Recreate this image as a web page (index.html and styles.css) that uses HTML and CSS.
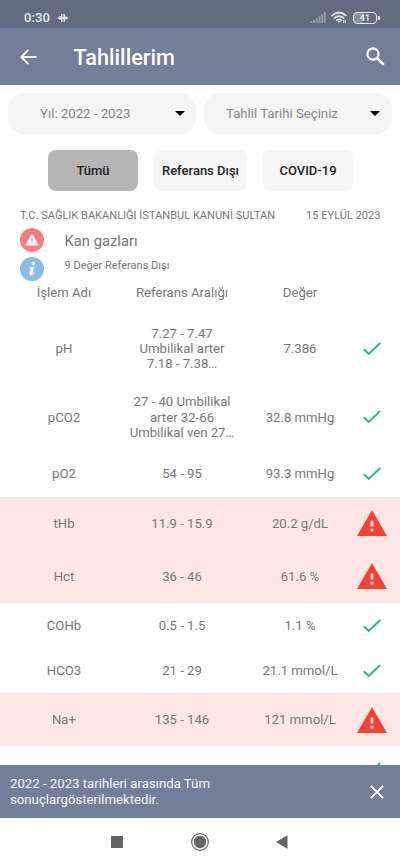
FILE: index.html
```html
<!DOCTYPE html>
<html lang="tr">
<head>
<meta charset="utf-8">
<title>Tahlillerim</title>
<link rel="stylesheet" href="styles.css">
</head>
<body>
<svg class="defs" width="0" height="0">
  <symbol id="check" viewBox="0 0 18 14"><path d="M.8 7.2 5.7 12 17.2 1" fill="none" stroke="#22b596" stroke-width="1.9"/></symbol>
  <symbol id="alert" viewBox="0 0 30 26"><path d="M15 0 30 26H0Z" fill="#f44336"/><path d="M13.6 10.7h2.8v5.8h-2.8zM13.6 18.7h2.8v2.7h-2.8z" fill="#fde5e3"/></symbol>
</svg>
<div class="screen">
  <div class="status">
    <span class="clock">0:30</span>
    <svg class="pulse" width="12" height="12" viewBox="0 0 12 12" fill="none" stroke="#e6e8ef" stroke-width="1.4"><path d="M.5 6h10.5M3 4v4M4.8 2v8M7.2 2v8M9 4.5v3"/></svg>
    <svg class="signal" width="16" height="11" viewBox="0 0 16 11" fill="#9299a9"><path d="M0 9.5h2V11H0zM2.9 8h2v3h-2zM5.7 6.2h2V11h-2zM8.5 4.2h2V11h-2zM11.2 2.2h2V11h-2zM13.8 0h1.8v11h-1.8z"/></svg>
    <svg class="wifi" width="17" height="13" viewBox="0 0 17 13" fill="none" stroke="#e6e8ef" stroke-width="1.7"><path d="M.7 4.8Q8 -1.8 15.3 4.8M3 7.3Q8 2.9 13 7.3M5.2 9.6Q8 7.2 10.8 9.6"/><path d="M6.5 10.1h3L8 12zM12.2 9h1.2v3h-1.2z" fill="#e6e8ef" stroke="none"/><path d="M14.6 9v3" stroke-width="1"/></svg>
    <span class="battery">41</span>
  </div>
  <header class="bar">
    <svg class="back" width="17" height="16" viewBox="0 0 17 16" fill="none" stroke="#fff" stroke-width="1.8"><path d="M16.5 8H1.5M8.3 .8 1.2 8l7.1 7.2"/></svg>
    <h1>Tahlillerim</h1>
    <svg class="search" width="19" height="19" viewBox="0 0 19 19" fill="none" stroke="#fff"><circle cx="7" cy="7" r="5.6" stroke-width="2.1"/><path d="m11.2 11.2 6.6 6.6" stroke-width="2.5"/></svg>
  </header>
  <main class="content">
    <div class="filters">
      <div class="select year"><span>Yıl: 2022 - 2023</span><i></i></div>
      <div class="select date"><span>Tahlil Tarihi Seçiniz</span><i></i></div>
    </div>
    <div class="chips">
      <div class="chip active">Tümü</div>
      <div class="chip mid">Referans Dışı</div>
      <div class="chip">COVID-19</div>
    </div>
    <div class="meta"><span class="hospital">T.C. SAĞLIK BAKANLIĞI İSTANBUL KANUNİ SULTAN</span><span class="day">15 EYLÜL 2023</span></div>
    <div class="summary">
      <svg width="24" height="24" viewBox="0 0 24 24"><circle cx="12" cy="12" r="12" fill="#fb7c80"/><path d="M12 6.2 18.2 17H5.8Z" fill="#fff" stroke="#fff" stroke-linejoin="round"/><path d="M11.4 9.5h1.2v4h-1.2zM11.4 14.5h1.2v1.3h-1.2z" fill="#fb7c80"/></svg>
      <span class="test">Kan gazları</span>
    </div>
    <div class="summary second">
      <svg width="24" height="24" viewBox="0 0 24 24"><circle cx="12" cy="12" r="12" fill="#8abde1"/><circle cx="13.4" cy="6.5" r="1.8" fill="#fff"/><path d="M9.5 10.2Q12 10 14.2 9.4L12.4 16.2Q12.5 17 14.1 15.4L14.8 16Q12.2 18.8 10.2 18Q9 17.5 9.6 15.5L10.7 11.8Q10.6 11.2 9.3 11.2Z" fill="#fff"/></svg>
      <span class="count">9 Değer Referans Dışı</span>
    </div>
    <div class="row head"><span>İşlem Adı</span><span>Referans Aralığı</span><span>Değer</span></div>
    <div class="row tall"><span>pH</span><span>7.27 - 7.47<br>Umbilikal arter<br>7.18 - 7.38…</span><span>7.386</span><svg class="check"><use href="#check"/></svg></div>
    <div class="row tall"><span>pCO2</span><span>27 - 40 Umbilikal<br>arter 32-66<br>Umbilikal ven 27…</span><span>32.8 mmHg</span><svg class="check"><use href="#check"/></svg></div>
    <div class="row"><span>pO2</span><span>54 - 95</span><span>93.3 mmHg</span><svg class="check"><use href="#check"/></svg></div>
    <div class="row out"><span>tHb</span><span>11.9 - 15.9</span><span>20.2 g/dL</span><svg class="alert"><use href="#alert"/></svg></div>
    <div class="row out"><span>Hct</span><span>36 - 46</span><span>61.6 %</span><svg class="alert"><use href="#alert"/></svg></div>
    <div class="row"><span>COHb</span><span>0.5 - 1.5</span><span>1.1 %</span><svg class="check"><use href="#check"/></svg></div>
    <div class="row"><span>HCO3</span><span>21 - 29</span><span>21.1 mmol/L</span><svg class="check"><use href="#check"/></svg></div>
    <div class="row out"><span>Na+</span><span>135 - 146</span><span>121 mmol/L</span><svg class="alert"><use href="#alert"/></svg></div>
    <div class="row"><span></span><span></span><span></span><svg class="check"><use href="#check"/></svg></div>
  </main>
  <div class="snackbar">
    <p>2022 - 2023 tarihleri arasında Tüm<br>sonuçlargösterilmektedir.</p>
    <svg width="14" height="14" viewBox="0 0 14 14" stroke="#fff" stroke-width="1.8"><path d="m.8.8 12.4 12.4M13.2.8.8 13.2"/></svg>
  </div>
  <nav class="nav">
    <svg width="12" height="12" viewBox="0 0 12 12"><rect width="12" height="12" rx=".5" fill="#656565"/></svg>
    <svg width="18" height="18" viewBox="0 0 18 18"><circle cx="9" cy="9" r="8.3" fill="none" stroke="#656565" stroke-width="1.2"/><circle cx="9" cy="9" r="6.2" fill="#656565"/></svg>
    <svg width="12" height="14" viewBox="0 0 12 14"><path d="M0 7 11.5.3v13.4z" fill="#656565"/></svg>
  </nav>
</div>
</body>
</html>
```
FILE: styles.css
```css
* { box-sizing: border-box; }
body { margin: 0; background: #fefefe; font-family: Roboto, sans-serif; color: #777; }
.defs { display: block; height: 0; }
.screen { width: 400px; height: 866px; display: flex; flex-direction: column; overflow: hidden; }
svg { flex: none; display: block; }

.status { height: 28px; flex: none; background: #636b81; display: flex; align-items: center; padding: 7px 23px 0 24px; color: #e6e8ef; }
.clock { font-size: 13px; font-weight: 500; width: 33px; letter-spacing: .1px; }
.signal { margin-left: auto; }
.wifi { margin-left: 5px; }
.battery { margin-left: 5px; width: 24px; height: 12px; border: 1.5px solid #e6e8ef; border-radius: 4px; font-size: 8.5px; font-weight: 700; line-height: 10px; text-align: center; background: linear-gradient(90deg, #8b91a2 40%, transparent 40%); position: relative; }
.battery::after { content: ""; position: absolute; right: -3.5px; top: 3px; width: 2px; height: 4px; background: #e6e8ef; border-radius: 0 1px 1px 0; }

.bar { height: 57px; flex: none; background: #737e98; display: flex; align-items: center; padding: 0 15px 0 20px; border-bottom: 1px solid #6e7993; }
.bar h1 { margin: 3px 0 0 36.5px; font-size: 21.7px; line-height: 26px; font-weight: 500; color: #fff; }
.back { margin-top: 1px; }
.search { margin-left: auto; }

.content { flex: 1; min-height: 0; overflow: hidden; padding-top: 8px; }
.filters { display: flex; padding-left: 8px; gap: 8px; }
.select { height: 41px; width: 188px; background: #f5f5f5; border-radius: 16px; display: flex; align-items: center; justify-content: space-between; padding: 0 11px 0 32px; font-size: 13.2px; color: #858585; }
.date { padding: 0 12px 0 22px; }
.select i { border: 5px solid transparent; border-top-color: #000; border-bottom: 0; }
.chips { display: flex; gap: 16px; padding: 16px 0 0 48px; }
.chip { width: 90px; height: 41px; border-radius: 8px; background: #f5f5f5; font-size: 13px; font-weight: 500; color: #222; display: flex; align-items: center; justify-content: center; white-space: nowrap; }
.chip.mid { width: 93px; }
.chip.active { background: #b5b5b5; }

.meta { display: flex; justify-content: space-between; padding: 0 19.5px 0 20px; height: 13px; margin-top: 18px; font-size: 11.05px; line-height: 13px; white-space: nowrap; }
.summary { display: flex; align-items: center; height: 24px; margin-top: 6px; padding-left: 20px; }
.test { margin: 2px 0 0 20.5px; font-size: 14.8px; }
.second { margin-top: 5px; }
.count { margin: -7px 0 0 20.5px; font-size: 11px; }

.row { display: grid; grid-template-columns: 128px 108px 128px 16px; height: 45px; align-items: center; text-align: center; font-size: 13.15px; line-height: 15.2px; white-space: nowrap; }
.row.head { height: 33.5px; padding-bottom: 11px; }
.row.tall { height: 68.5px; }
.row.out { height: 53.3px; background: #fde6e4; }
.row svg { justify-self: center; }
.check { width: 18px; height: 14px; }
.alert { width: 30px; height: 26px; }

.snackbar { height: 53px; flex: none; background: #737e98; color: #f4f5f8; display: flex; align-items: center; justify-content: space-between; padding: 0 16px 0 10px; }
.snackbar p { margin: 0; font-size: 13.2px; line-height: 15.2px; }
.nav { height: 48px; flex: none; display: flex; align-items: center; padding-left: 111px; }
.nav svg + svg { margin-left: 68px; }
.nav svg:last-child { margin-left: 67px; }
```
